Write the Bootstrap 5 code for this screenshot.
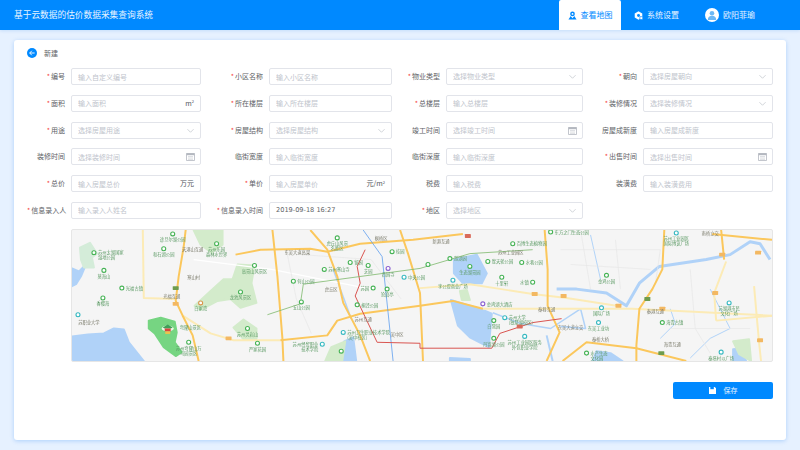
<!DOCTYPE html>
<html lang="zh">
<head>
    <meta charset="UTF-8">
    <title>基于云数据的估价数据采集查询系统</title>
    <link href="https://cdn.jsdelivr.net/npm/bootstrap@5.3.0/dist/css/bootstrap.min.css" rel="stylesheet">
    <style>
        body {
            background: #e6f1ff;
            font-family: "Noto Sans CJK SC", "Noto Sans", sans-serif;
            font-size: 7px;
            color: #606266;
            height: 450px;
            overflow: hidden;
        }
        .top-bar { height: 30px; background: #0089ff; box-shadow: 0 1px 3px rgba(0, 110, 220, .15); }
        .top-title { font-size: 8.7px; color: #e8f4ff; padding-left: 14px; }
        .top-item { font-size: 8px; color: #e8f4ff; height: 30px; gap: 4px; }
        .top-item.is-active { width: 62px; background: #fff; color: #0089ff; border-radius: 2px 2px 0 0; margin-right: 13px; }
        .top-item.is-set { margin-right: 26px; }
        .top-item.is-user { margin-right: 45px; }
        .user-face { width: 14px; height: 14px; background: #fff; border-radius: 50%; }
        .page-card {
            margin: 10px 14px;
            height: 400px;
            background: #fff;
            border-radius: 3px;
            box-shadow: 0 1px 4px rgba(0, 110, 240, .25);
            padding: 8px 13px 0;
        }
        .card-head { height: 20px; gap: 7px; padding-bottom: 10px; color: #606266; }
        .back-dot { width: 10px; height: 10px; background: #0089ff; border-radius: 50%; }
        .form-grid {
            display: grid;
            grid-template-columns: 44px 130px 68px 123px 54px 136.5px 60.5px 130px;
            grid-auto-rows: 17px;
            row-gap: 9.75px;
        }
        .fld-label { line-height: 17px; text-align: right; padding-right: 6px; white-space: nowrap; }
        .fld-label i { color: #f5443c; font-style: normal; margin-right: 1px; }
        .form-control.fld-input, .form-select.fld-input {
            height: 17px;
            min-height: 0;
            padding: 0 6px;
            font-size: 7px;
            line-height: 15px;
            color: #606266;
            border: 1px solid #e2e4ea;
            border-radius: 2px;
            box-shadow: none;
        }
        .fld-input::placeholder { color: #c0c4cc; opacity: 1; }
        .form-select.fld-input {
            color: #c0c4cc;
            background-size: 7px 7px;
            background-position: right 6px center;
            background-image: url("data:image/svg+xml,%3csvg xmlns='http://www.w3.org/2000/svg' viewBox='0 0 16 16'%3e%3cpath fill='none' stroke='%23b4b8c0' stroke-width='1.4' d='M1 5l7 7 7-7'/%3e%3c/svg%3e");
        }
        .fld-input.has-value { font-family: "DejaVu Sans", sans-serif; font-size: 6.6px; }
        .fld-suffix { position: absolute; right: 7px; top: 0; line-height: 17px; color: #50535a; }
        .fld-suffix.is-icon { right: 6px; }
        .fld-suffix sup { font-size: 4px; top: -.6em; }
        .fld-suffix svg { display: block; margin-top: 4px; }
        .map-box {
            margin: 9.75px 0 0 44px;
            height: 133px;
            background: #f5f5f5;
            border: 1px solid #e6e6e6;
            border-radius: 2px;
            overflow: hidden;
        }
        .map-box svg { display: block; width: 100%; height: 100%; filter: blur(.3px); }
        .map-box text { font-family: "Noto Sans CJK SC", sans-serif; font-size: 4.3px; fill: #5b9a64; }
        .map-box text.road { fill: #7a7a6a; }
        .save-row { margin-top: 20.5px; }
        .btn.save-btn {
            width: 100px;
            height: 17px;
            padding: 0;
            gap: 8px;
            font-size: 7px;
            color: #e8f4ff;
            background: #0089ff;
            border: 0;
            border-radius: 2px;
        }
    </style>
</head>
<body>
<nav class="top-bar d-flex align-items-center justify-content-between">
    <div class="top-title">基于云数据的估价数据采集查询系统</div>
    <div class="d-flex align-items-center">
        <div class="top-item is-active d-flex align-items-center justify-content-center">
            <svg width="9" height="9" viewBox="0 0 10 10"><circle cx="5" cy="3.2" r="2.6" fill="#0089ff"/><circle cx="5" cy="3.2" r="1" fill="#fff"/><path d="M3 5.5L5 8l2-2.500 2.500 4H.5z" fill="#0089ff"/></svg>
            查看地图
        </div>
        <div class="top-item is-set d-flex align-items-center">
            <svg width="9" height="9" viewBox="0 0 10 10"><path d="M5 .3l4.200 2.400v4.600L5 9.700.8 7.300V2.700z" fill="#fff"/><circle cx="5" cy="5" r="1.600" fill="#0089ff"/><path d="M6.500 6.300h3.200v3.200H6.500z" fill="#fff" stroke="#0089ff" stroke-width=".7"/></svg>
            系统设置
        </div>
        <div class="top-item is-user d-flex align-items-center">
            <span class="user-face d-flex align-items-center justify-content-center">
                <svg width="10" height="10" viewBox="0 0 10 10"><circle cx="5" cy="3.300" r="2.300" fill="#6db8f5"/><path d="M.8 10c0-3 1.800-4.300 4.200-4.300S9.200 7 9.200 10z" fill="#6db8f5"/></svg>
            </span>
            欧阳菲瑜
        </div>
    </div>
</nav>

<main class="page-card">
    <div class="card-head d-flex align-items-center">
        <span class="back-dot d-flex align-items-center justify-content-center">
            <svg width="6" height="6" viewBox="0 0 8 8"><path d="M7.500 4H1M3.800 1L.9 4l2.900 3" fill="none" stroke="#fff" stroke-width="1.200"/></svg>
        </span>
        新建
    </div>

    <form class="form-grid">
        <label class="fld-label"><i>*</i>编号</label>
        <input class="form-control fld-input" placeholder="输入自定义编号">
        <label class="fld-label"><i>*</i>小区名称</label>
        <input class="form-control fld-input" placeholder="输入小区名称">
        <label class="fld-label"><i>*</i>物业类型</label>
        <select class="form-select fld-input"><option>选择物业类型</option></select>
        <label class="fld-label"><i>*</i>朝向</label>
        <select class="form-select fld-input"><option>选择房屋朝向</option></select>

        <label class="fld-label"><i>*</i>面积</label>
        <div class="position-relative"><input class="form-control fld-input" placeholder="输入面积"><span class="fld-suffix">m<sup>2</sup></span></div>
        <label class="fld-label"><i>*</i>所在楼层</label>
        <input class="form-control fld-input" placeholder="输入所在楼层">
        <label class="fld-label"><i>*</i>总楼层</label>
        <input class="form-control fld-input" placeholder="输入总楼层">
        <label class="fld-label"><i>*</i>装修情况</label>
        <select class="form-select fld-input"><option>选择装修情况</option></select>

        <label class="fld-label"><i>*</i>用途</label>
        <select class="form-select fld-input"><option>选择房屋用途</option></select>
        <label class="fld-label"><i>*</i>房屋结构</label>
        <select class="form-select fld-input"><option>选择房屋结构</option></select>
        <label class="fld-label">竣工时间</label>
        <div class="position-relative"><input class="form-control fld-input" placeholder="选择竣工时间"><span class="fld-suffix is-icon"><svg width="9" height="9" viewBox="0 0 9 9"><use href="#cal"/></svg></span></div>
        <label class="fld-label">房屋成新度</label>
        <input class="form-control fld-input" placeholder="输入房屋成新度">

        <label class="fld-label">装修时间</label>
        <div class="position-relative"><input class="form-control fld-input" placeholder="选择装修时间"><span class="fld-suffix is-icon"><svg width="9" height="9" viewBox="0 0 9 9"><use href="#cal"/></svg></span></div>
        <label class="fld-label">临街宽度</label>
        <input class="form-control fld-input" placeholder="输入临街宽度">
        <label class="fld-label">临街深度</label>
        <input class="form-control fld-input" placeholder="输入临街深度">
        <label class="fld-label"><i>*</i>出售时间</label>
        <div class="position-relative"><input class="form-control fld-input" placeholder="选择出售时间"><span class="fld-suffix is-icon"><svg width="9" height="9" viewBox="0 0 9 9"><use href="#cal"/></svg></span></div>

        <label class="fld-label"><i>*</i>总价</label>
        <div class="position-relative"><input class="form-control fld-input" placeholder="输入房屋总价"><span class="fld-suffix">万元</span></div>
        <label class="fld-label"><i>*</i>单价</label>
        <div class="position-relative"><input class="form-control fld-input" placeholder="输入房屋单价"><span class="fld-suffix">元/m<sup>2</sup></span></div>
        <label class="fld-label">税费</label>
        <input class="form-control fld-input" placeholder="输入税费">
        <label class="fld-label">装潢费</label>
        <input class="form-control fld-input" placeholder="输入装潢费用">

        <label class="fld-label"><i>*</i>信息录入人</label>
        <input class="form-control fld-input" placeholder="输入录入人姓名">
        <label class="fld-label"><i>*</i>信息录入时间</label>
        <input class="form-control fld-input has-value" value="2019-09-18 16:27">
        <label class="fld-label"><i>*</i>地区</label>
        <select class="form-select fld-input"><option>选择地区</option></select>
    </form>

    <div class="map-box">
        <svg id="map" viewBox="0 0 702 133" preserveAspectRatio="none"></svg>
    </div>

    <div class="save-row d-flex justify-content-end">
        <button type="button" class="btn save-btn d-flex align-items-center justify-content-center">
            <svg width="7" height="7" viewBox="0 0 8 8"><path d="M0 0h6.500L8 1.500V8H0z" fill="#fff"/><path d="M1.500 0h4v2.500h-4z" fill="#0089ff"/></svg>
            保存
        </button>
    </div>
</main>

<svg width="0" height="0" class="position-absolute">
    <symbol id="cal" viewBox="0 0 9 9">
        <path d="M.5 1.500h8v7h-8z" fill="none" stroke="#b4b8c0" stroke-width=".8"/>
        <path d="M.5 1.200h8v2h-8z" fill="#b4b8c0"/>
        <path d="M2 4.500h5M2 6h5M2 7.400h5" stroke="#c8cbd2" stroke-width=".6"/>
    </symbol>
</svg>

<script>
    // map picture: areas, roads, metro lines, then points of interest
    const green = '#d3ebcb', water = '#b0d2f8', road = '#fbc75c', pale = '#fcebb6';

    const areas = [
        [water, '0,108 16,106 32,105 42,100 52,101 57,114 72,133 0,133'],
        [water, '0,39 7,42 14,35 9,47 4,55 0,57'],
        [water, '383,30 406,25 416,44 411,54 392,54 383,44'],
        [water, '380,71 412,81 421,85 418,119 399,109 387,97'],
        [water, '379,130 399,131 399,133 379,133'],
        [water, '522,133 526,123 540,125 552,133'],
        [water, '663,121 672,120 676,133 663,133'],
        [water, '273,113 282,109 285,133 269,133'],
        ['#d4ecd9', '8,18 18,13 25,24 20,28 22,38 12,38 9,30'],
        [green, '123,77 139,62 152,50 161,50 166,35 183,36 180,54 185,74 169,79 159,70 146,72 129,81'],
        [green, '122,0 151,0 151,15 140,23 129,15'],
        [green, '162,99 172,91 185,100 185,111 172,111'],
        [green, '254,133 260,119 274,113 271,133'],
        [green, '389,62 396,61 399,71 391,71'],
        [green, '663,113 679,111 681,133 669,126'],
        ['#76d582', '77,92 89,89 103,93 105,104 103,114 110,124 104,128 92,119 83,105 77,100']
    ];

    const lines = [
        [water, 3, '486,60 506,60 536,64 556,77 569,54 589,37 636,30 660,25 680,12 690,14 700,30'],
        [water, 2, '476,107 482,133'],
        [water, 1.500, '422,84 450,95 480,100 510,80 515,100 490,98'],
        [water, 1, '520,5 530,50'],
        [water, 1, '620,130 640,110 660,100 640,60'],
        [water, 1, '590,110 605,95 600,80'],
        [water, 1.500, '262,40 280,90'],
        ['#ffffff', 1.200, '122,30 200,40 300,60'],
        ['#e6e6e6', .7, '215,20 225,70 240,105'],
        ['#e6e6e6', .7, '230,25 300,30 330,70'],
        ['#e6e6e6', .7, '490,20 590,20 585,55'],
        ['#e6e6e6', .7, '500,35 580,40'],
        ['#e6e6e6', .7, '510,0 520,60'],
        ['#e6e6e6', .7, '545,10 550,60'],
        ['#e6e6e6', .7, '620,40 625,100 640,125'],
        ['#e6e6e6', .7, '600,100 680,100'],
        [pale, 2, '71,0 72,69 104,70'],
        [pale, 2, '111,87 139,105 162,112 209,112'],
        [pale, 2, '349,59 399,55 462,65 496,69 546,77'],
        [pale, 2, '412,80 476,80 562,80 702,87'],
        [pale, 2, '684,57 689,114 691,133'],
        [pale, 2, '646,92 644,64 656,32'],
        [pale, 2, '646,92 702,87'],
        [road, 2, '114,0 112,17 107,47 104,72 111,87 121,107 127,133'],
        [road, 2, '201,0 206,47 211,110 212,133'],
        [road, 2, '164,25 189,20 239,19 256,22 289,14 342,10 392,4'],
        [road, 2, '239,0 256,20 266,47 272,74 289,107 299,133'],
        [road, 2, '209,112 256,107 266,92 289,85 349,77 382,72 412,80'],
        [road, 2, '474,0 477,40 477,77 489,104 476,133'],
        [road, 2, '329,0 337,24 349,64 352,133'],
        [road, 2, '594,0 592,40 582,60 569,80 566,117 566,133'],
        [road, 2, '492,133 516,114 566,120 616,133'],
        [road, 2, '642,4 702,10'],
        [road, 2, '651,0 654,30'],
        ['#5c9dee', .8, '292,0 311,27 317,84 322,133'],
        ['#d9534f', 1, '294,20 286,37 289,54 284,67 306,114 349,115 349,120 421,120 429,105 462,94 491,90'],
        ['#7cb86a', .8, '196,86 229,75 232,55 349,39 399,24 462,20']
    ];

    const shields = [
        [104,75,'#f3b862'], [157,110,'#f3b862'], [104,59,'#6e9c4e'], [397,6,'#d96a5a'],
        [464,65,'#f3b862'], [493,67,'#f3b862'], [548,77,'#f3b862'], [577,70,'#6e9c4e'],
        [592,80,'#f3b862'], [449,98,'#d96a5a'], [688,23,'#f3b862'], [652,25,'#f3b862'],
        [645,64,'#f3b862'], [690,112,'#f3b862'], [591,125,'#6e9c4e']
    ];

    const G = '#45b254', T = '#35b8c0', P = '#8a5fd0', O = '#d9954a';
    // x, y, colour, label ("|" breaks the line), label below (b), right (r) or left (l)
    const pois = [
        [22,23,G,'苏州太湖国家|湿地公园','r'], [32,41,G,'莫海山','b'], [50,59,G,'光福古镇','r'], [31,69,G,'香樱海','b'],
        [6,86,T,'','b'], [101,4,G,'途旦尔湖公园','b'], [92,19,G,'和石湖公园','b'], [145,14,G,'苏州乐园|森林水世界','b'],
        [183,36,G,'高景山风景区','b'], [169,63,G,'龙池风景区','b'], [129,74,O,'白家湾','b'], [176,100,G,'苏州灵岩山','b'],
        [117,114,G,'苏州穹窿山万|马园景区','b'], [186,115,G,'严家花园','b'], [251,116,T,'苏州经贸职业|技术学院','l'],
        [272,104,T,'苏州卫生职业技术学院|(吴中校区)','r'], [270,123,G,'','b'], [222,52,G,'何山公园','r'], [230,73,G,'五山公园','b'],
        [266,8,G,'虎丘山风景|名胜区','b'], [253,40,G,'苏州寒山寺','r'], [279,33,G,'留园','r'], [297,36,G,'芝园','b'],
        [317,39,P,'西园寺','b'], [321,22,G,'桂园','r'], [302,59,G,'苏园','l'], [316,60,G,'沧浪亭','b'],
        [286,76,G,'桐泾公园','r'], [333,48,T,'中央公园','r'], [442,14,G,'百博生态植物园','r'], [480,2,G,'东方之门生态公园','r'],
        [417,32,G,'摩天轮公园','r'], [451,33,G,'水巷公园','r'], [399,37,G,'生态湖景园','b'], [379,29,G,'游湖园','r'],
        [357,35,G,'','r'], [382,51,T,'李公堤商业广场','b'], [431,48,G,'十里轩','b'], [462,53,G,'水镇','l'],
        [536,46,G,'金鸡公园','b'], [412,75,P,'金鸡湖大酒店','r'], [531,79,T,'国际广场','b'], [528,94,T,'东吴工业坊','b'],
        [423,92,G,'白鹭园','b'], [434,89,T,'苏州大学|(独墅湖校区)','r'], [423,110,G,'丹锦湖公园','b'], [454,108,T,'苏州工业园区服务|外包职业学院','b'],
        [592,94,G,'海青古镇','r'], [659,74,T,'苏湖港市民|文化广场','b'], [651,124,T,'秦塔村以广场','b'], [516,125,G,'水产生态|文化园','r'],
        [606,3,T,'苏州工业园区|国际博览广场','b']
    ];

    const roadNames = [
        [121,21,'天港山互通'], [100,69,'光福互通'], [122,50,'寒山村'], [226,24,'东吴大道高架'], [260,62,'虎丘区'],
        [292,92,'苏州互通'], [326,108,'吴中区'], [310,10,'枫桥区'], [370,13,'新港互通'], [440,24,'苏州工业园区'],
        [476,82,'秦巷互通'], [500,101,'东吴大道立交'], [585,84,'秦港互通'], [530,113,'秦桥大桥'], [640,5,'南桥立交'], [602,118,'海青互通'],
        [17,95,'苏职业大学']
    ];

    let svg = '';
    areas.forEach(([c, pts]) => { svg += `<polygon points="${pts}" fill="${c}" stroke="${c}" stroke-width="2" stroke-linejoin="round"/>`; });
    lines.forEach(([c, w, pts]) => { svg += `<polyline points="${pts}" fill="none" stroke="${c}" stroke-width="${w}" stroke-linejoin="round"/>`; });
    shields.forEach(([x, y, c]) => { svg += `<rect x="${x - 3}" y="${y - 2}" width="6" height="4" rx=".5" fill="${c}"/>`; });
    roadNames.forEach(([x, y, t]) => { svg += `<text class="road" x="${x}" y="${y}" text-anchor="middle">${t}</text>`; });
    pois.forEach(([x, y, c, t, pos]) => {
        svg += `<circle cx="${x}" cy="${y}" r="2" fill="#fff" stroke="${c}" stroke-width="1.100"/>`;
        t.split('|').forEach((part, i) => {
            if (!part) return;
            if (pos === 'b') svg += `<text x="${x}" y="${y + 7.500 + i * 5}" text-anchor="middle">${part}</text>`;
            if (pos === 'r') svg += `<text x="${x + 4}" y="${y + 1.700 + i * 5}">${part}</text>`;
            if (pos === 'l') svg += `<text x="${x - 4}" y="${y + 1.700 + i * 5}" text-anchor="end">${part}</text>`;
        });
    });
    // scenic spot marker on the green mountain
    svg += '<ellipse cx="96" cy="100" rx="6" ry="3" fill="#eaf7e6"/><path d="M91 99l5-3 5 3-2 1h-6z" fill="#3f9f58"/><rect x="93" y="100" width="6" height="3" fill="#d9473f"/><rect x="93.500" y="103" width="5" height="2.500" fill="#f0c24a"/>';
    svg += '<text x="108" y="101">穹窿山景区</text>';
    document.getElementById('map').innerHTML = svg;
</script>
<script src="https://cdn.jsdelivr.net/npm/bootstrap@5.3.0/dist/js/bootstrap.bundle.min.js"></script>
</body>
</html>
